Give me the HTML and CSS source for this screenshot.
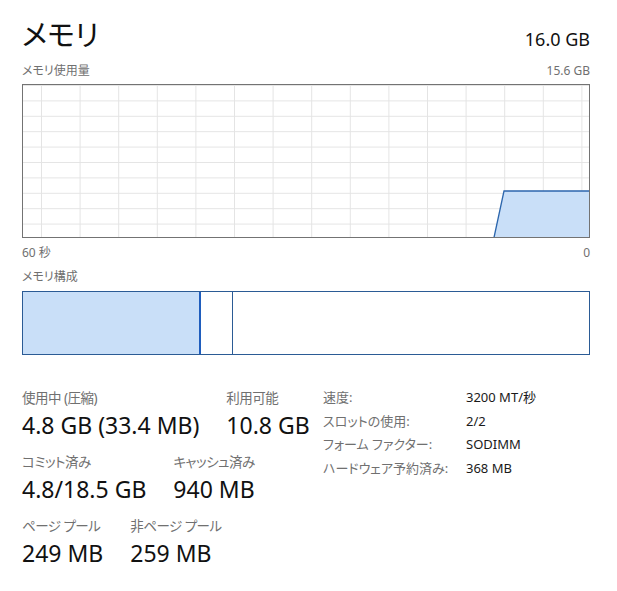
FILE: index.html
```html
<!DOCTYPE html>
<html lang="ja">
<head>
	<meta charset="utf-8">
	<title>メモリ</title>
	<link rel="stylesheet" href="styles.css">
</head>
<body>
	<div class="panel">

		<div class="header">
			<div class="title">メモリ</div>
			<div class="total">16.0 GB</div>
		</div>

		<div class="caption">
			<span>メモリ使用量</span>
			<span>15.6 GB</span>
		</div>

		<svg class="graph" width="568" height="154" viewBox="0 0 568 154">
			<defs>
				<pattern id="grid" x="19" y="1" width="38.6" height="15.4" patternUnits="userSpaceOnUse">
					<path d="M0.5 0 V15.4 M0 0.5 H38.6" stroke="#e4e4e4" stroke-width="1" fill="none"/>
				</pattern>
			</defs>
			<rect x="0" y="0" width="568" height="154" fill="url(#grid)"/>
			<polygon points="472,153.5 482,107 568,107 568,153.5" fill="#c9dff8"/>
			<polyline points="472,153.5 482,107 568,107" fill="none" stroke="#2c66ad" stroke-width="1.3"/>
			<rect x="0.5" y="0.5" width="567" height="153" fill="none" stroke="#737373" stroke-width="1"/>
		</svg>

		<div class="caption axis">
			<span>60 秒</span>
			<span>0</span>
		</div>

		<div class="caption">
			<span>メモリ構成</span>
		</div>

		<div class="composition">
			<div class="seg in-use"></div>
			<div class="seg modified"></div>
			<div class="seg rest"></div>
		</div>

		<div class="stats">
			<div class="stats-left">
				<div class="stat-row">
					<div class="stat">
						<div class="label">使用中 (圧縮)</div>
						<div class="value">4.8 GB (33.4 MB)</div>
					</div>
					<div class="stat">
						<div class="label">利用可能</div>
						<div class="value">10.8 GB</div>
					</div>
				</div>
				<div class="stat-row">
					<div class="stat">
						<div class="label">コミット済み</div>
						<div class="value">4.8/18.5 GB</div>
					</div>
					<div class="stat">
						<div class="label">キャッシュ済み</div>
						<div class="value">940 MB</div>
					</div>
				</div>
				<div class="stat-row">
					<div class="stat">
						<div class="label">ページ プール</div>
						<div class="value">249 MB</div>
					</div>
					<div class="stat">
						<div class="label">非ページ プール</div>
						<div class="value">259 MB</div>
					</div>
				</div>
			</div>

			<div class="details">
				<div class="key">速度:</div>
				<div class="val">3200 MT/秒</div>
				<div class="key">スロットの使用:</div>
				<div class="val">2/2</div>
				<div class="key">フォーム ファクター:</div>
				<div class="val">SODIMM</div>
				<div class="key">ハードウェア予約済み:</div>
				<div class="val">368 MB</div>
			</div>
		</div>

	</div>
</body>
</html>
```

FILE: styles.css
```css
body {
	margin: 0;
	background: #ffffff;
	font-family: "Noto Sans", "Noto Sans CJK JP", sans-serif;
	font-feature-settings: "palt";
	color: #1a1a1a;
}

.panel {
	width: 568px;
	margin-left: 22px;
	padding-top: 15px;
}

.header {
	display: flex;
	justify-content: space-between;
	align-items: baseline;
	height: 40px;
}

.title {
	font-size: 29px;
	line-height: 40px;
	color: #111111;
}

.total {
	font-size: 18px;
	line-height: 24px;
	color: #111111;
}

.caption {
	display: flex;
	justify-content: space-between;
	font-size: 12px;
	line-height: 16px;
	color: #707070;
	margin-top: 8px;
}

.graph {
	display: block;
	margin-top: 5px;
}

.caption.axis {
	margin-top: 7px;
}

.composition {
	display: flex;
	height: 64px;
	margin-top: 6px;
	border: 1px solid #2b5b95;
	box-sizing: border-box;
}

.seg {
	height: 100%;
}

.in-use {
	width: 176px;
	background: #c9dff8;
	border-right: 2px solid #1f5dbd;
}

.modified {
	width: 31px;
	border-right: 1px solid #2b5b95;
}

.rest {
	flex: 1;
}

.stats {
	display: flex;
	align-items: flex-start;
	margin-top: 31px;
}

.stats-left {
	width: 301px;
	padding-top: 3px;
}

.stat-row {
	display: flex;
	gap: 27px;
	margin-bottom: 14px;
}

.label {
	font-size: 13.5px;
	line-height: 18px;
	letter-spacing: -0.5px;
	color: #707070;
}

.value {
	font-size: 23px;
	line-height: 28px;
	margin-top: 4px;
	color: #111111;
}

.details {
	display: grid;
	grid-template-columns: 143px auto;
	font-size: 13px;
	line-height: 23.5px;
}

.key {
	color: #707070;
}

.val {
	color: #1a1a1a;
}
```
